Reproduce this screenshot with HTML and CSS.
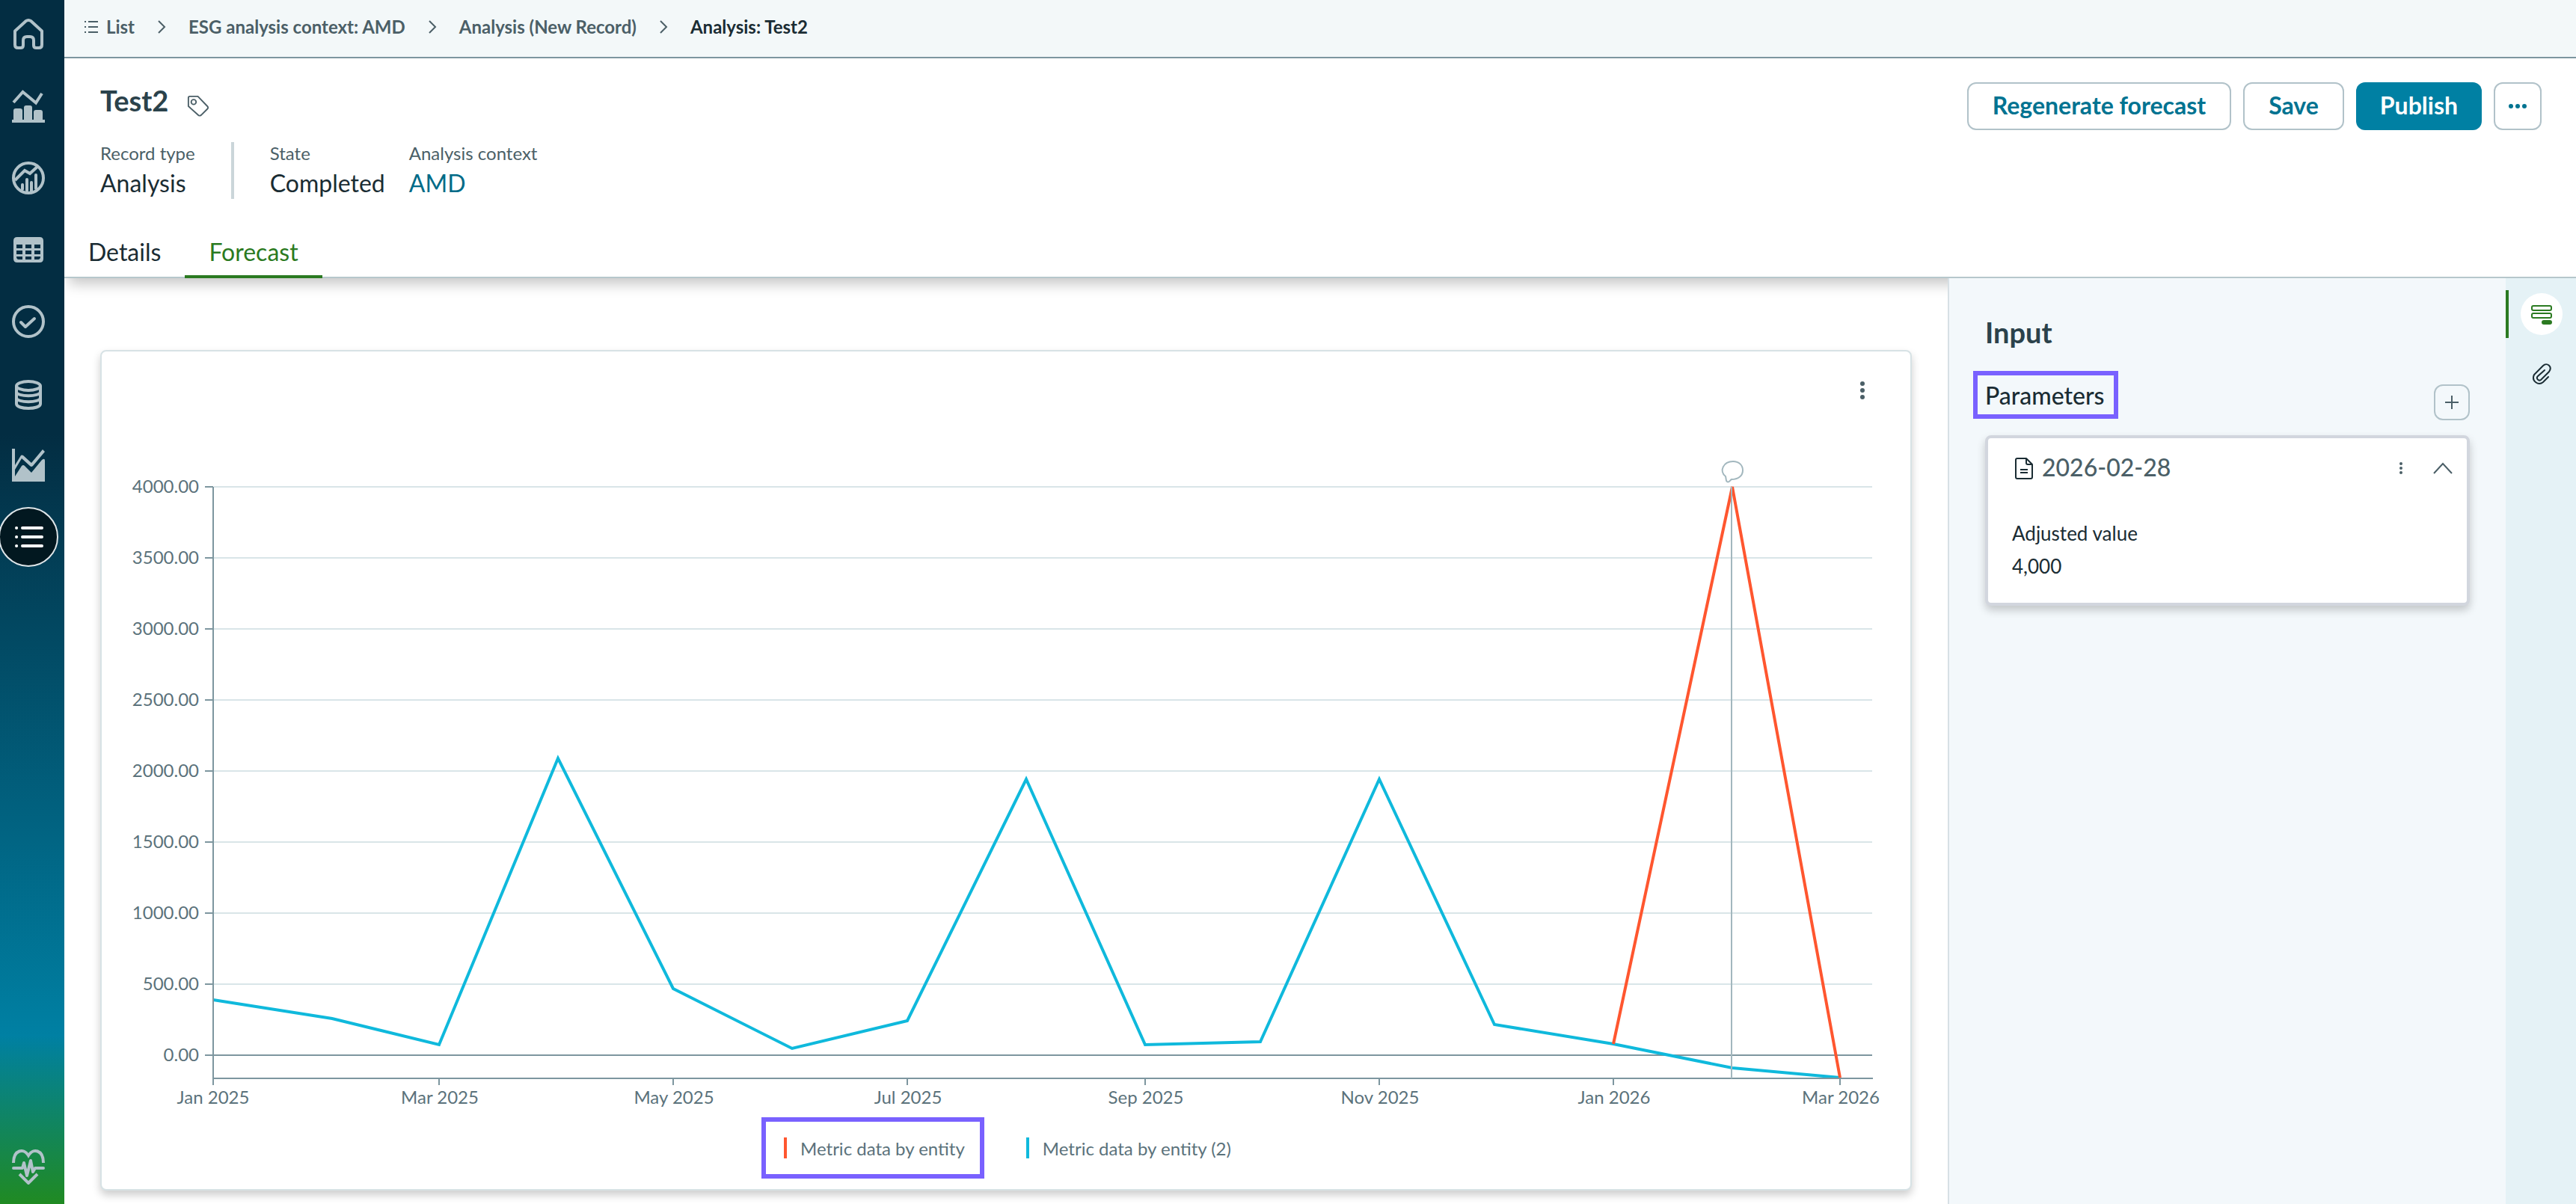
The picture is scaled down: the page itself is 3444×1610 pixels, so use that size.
FILE: index.html
```html
<!DOCTYPE html>
<html lang="en">
<head>
<meta charset="utf-8">
<title>Analysis: Test2</title>
<meta name="viewport" content="width=device-width, initial-scale=1">
<link rel="stylesheet" href="styles.css">
</head>
<body>
<div class="app">
  <nav class="sidebar" aria-label="Main">
    <a class="nav-item" href="#home" aria-label="Home">
      <svg class="icon-nav" viewBox="0 0 48 48" fill="none" stroke="currentColor" stroke-width="4" stroke-linejoin="round"><path d="M6 19.500 20.500 6.200Q24 3.800 27.500 6.200L42 19.500V38Q42 42 38 42H34.500Q31 42 31 38.500V32Q31 27 26 27H22Q17 27 17 32V38.500Q17 42 13.500 42H10Q6 42 6 38Z"/></svg>
    </a>
    <a class="nav-item" href="#dashboards" aria-label="Dashboards">
      <svg class="icon-nav" viewBox="0 0 48 48"><path d="M4 19 16.500 5 34 19.500 42 7" fill="none" stroke="currentColor" stroke-width="4"/><path fill="currentColor" d="M2 42h2V30q0-3 3-3h6q3 0 3 3v12h2V26q0-3 3-3h5q3 0 3 3v16h2V32q0-3 3-3h6q3 0 3 3v10h3v4H2z"/></svg>
    </a>
    <a class="nav-item" href="#analytics" aria-label="Analytics">
      <svg class="icon-nav" viewBox="0 0 48 48" fill="none" stroke="currentColor" stroke-width="4"><circle cx="24" cy="24" r="20"/><path d="M6 27 19 14 26 18 37 8"/><path stroke-linecap="round" d="M16 33v6M22 26v15M28 30v12M34 20v18"/></svg>
    </a>
    <a class="nav-item" href="#tables" aria-label="Tables">
      <svg class="icon-nav" viewBox="0 0 48 48"><path fill="currentColor" fill-rule="evenodd" d="M9 7h30q5 0 5 5v24q0 5-5 5H9q-5 0-5-5V12q0-5 5-5zM8 17v5h8v-5zm12 0v5h8v-5zm12 0v5h8v-5zM8 25v5h8v-5zm12 0v5h8v-5zm12 0v5h8v-5zM8 33q0 4 3 4h5v-4zm12 0v4h8v-4zm12 0v4h5q3 0 3-4z"/></svg>
    </a>
    <a class="nav-item" href="#tasks" aria-label="Tasks">
      <svg class="icon-nav" viewBox="0 0 48 48" fill="none" stroke="currentColor" stroke-width="4" stroke-linecap="round" stroke-linejoin="round"><circle cx="24" cy="24" r="20"/><path d="M14 25l6 6 12-11"/></svg>
    </a>
    <a class="nav-item" href="#data" aria-label="Data">
      <svg class="icon-nav" viewBox="0 -2 48 48" fill="none" stroke="currentColor" stroke-width="4"><ellipse cx="24" cy="12" rx="16" ry="6"/><path d="M8 12v24c0 8 32 8 32 0V12M8 20c0 7 32 7 32 0M8 28c0 7 32 7 32 0"/></svg>
    </a>
    <a class="nav-item" href="#trends" aria-label="Trends">
      <svg class="icon-nav" viewBox="0 0 48 48"><path fill="currentColor" d="M2 2h4v22L14 11q1-1 3 0l11 10L43 3l3 3-16 19q-2 2-4 0L15 15 6 30v9L15 25q2-2 4 0l9 9 14-17q4-3 4 1v28H2z"/></svg>
    </a>
    <a class="nav-item nav-item-active" href="#lists" aria-label="Lists" aria-current="page">
      <svg class="icon-nav" viewBox="0 0 48 48" stroke="currentColor" stroke-width="4" stroke-linecap="round"><path d="M8 12h.1M8 24h.1M8 36h.1M16 12h26M16 24h26M16 36h26"/></svg>
    </a>
    <a class="nav-item nav-item-last" href="#health" aria-label="Health">
      <svg class="icon-nav" viewBox="0 0 48 48" fill="none" stroke="currentColor" stroke-width="4"><path d="M4 19C4 1 18-1 24 9 30-1 44 1 44 19"/><path stroke-linecap="round" stroke-linejoin="round" d="M4 26h12l2-7 4 17 5-20 3 15 3-5h11"/><path d="M12 34l12 12 12-12"/></svg>
    </a>
  </nav>

  <div class="page">
    <nav class="breadcrumb" aria-label="Breadcrumb">
      <a class="crumb" href="#list"><svg class="icon-list" viewBox="0 0 20 20" stroke="currentColor" stroke-width="2"><path d="M1 3h2M1 10h2M1 17h2M6 3h13M6 10h13M6 17h13"/></svg>List</a>
      <svg class="icon-sep" viewBox="0 0 12 18" fill="none" stroke="currentColor" stroke-width="2"><path d="M2 1l8 8-8 8"/></svg>
      <a class="crumb" href="#context">ESG analysis context: AMD</a>
      <svg class="icon-sep" viewBox="0 0 12 18" fill="none" stroke="currentColor" stroke-width="2"><path d="M2 1l8 8-8 8"/></svg>
      <a class="crumb" href="#new">Analysis (New Record)</a>
      <svg class="icon-sep" viewBox="0 0 12 18" fill="none" stroke="currentColor" stroke-width="2"><path d="M2 1l8 8-8 8"/></svg>
      <span class="crumb crumb-current" aria-current="page">Analysis: Test2</span>
    </nav>

    <header class="record">
      <div class="record-info">
        <div class="record-title">
          <h1 class="title">Test2</h1>
          <button class="icon-button" type="button" aria-label="Add tag"><svg class="icon-tag" viewBox="0 0 32 32" fill="none" stroke="currentColor" stroke-width="2" stroke-linejoin="round"><path d="M4 2H15.500L29 16Q31 18 29 20L20 29Q18 30 16.500 29L2 16V4Q2 2 4 2Z"/><circle cx="9.500" cy="10" r="3.500"/></svg></button>
        </div>
        <dl class="facts">
          <div class="fact fact-lead"><dt class="fact-label">Record type</dt><dd class="fact-value">Analysis</dd></div>
          <div class="fact"><dt class="fact-label">State</dt><dd class="fact-value">Completed</dd></div>
          <div class="fact"><dt class="fact-label">Analysis context</dt><dd class="fact-value"><a class="fact-link" href="#amd">AMD</a></dd></div>
        </dl>
      </div>
      <div class="actions">
        <button class="button" type="button">Regenerate forecast</button>
        <button class="button" type="button">Save</button>
        <button class="button button-primary" type="button">Publish</button>
        <button class="button button-more" type="button" aria-label="More actions"><svg class="icon-more" viewBox="0 0 28 8" fill="currentColor"><circle cx="5" cy="4" r="3"/><circle cx="14" cy="4" r="3"/><circle cx="23" cy="4" r="3"/></svg></button>
      </div>
    </header>

    <div class="tabs" role="tablist">
      <button class="tab" type="button" role="tab" aria-selected="false">Details</button>
      <button class="tab tab-active" type="button" role="tab" aria-selected="true">Forecast</button>
    </div>

    <div class="content">
      <main class="main">
        <section class="chart-card" aria-label="Forecast chart">
          <div class="chart-tools">
            <button class="icon-button" type="button" aria-label="Chart menu"><svg class="icon-kebab" viewBox="0 0 8 28" fill="currentColor"><circle cx="4" cy="5" r="3"/><circle cx="4" cy="14" r="3"/><circle cx="4" cy="23" r="3"/></svg></button>
          </div>
          <svg class="chart" viewBox="0 0 2418 890" role="img" aria-label="Metric data by entity, January 2025 to March 2026">
            <path class="grid-line" d="M150 51H2367M150 146H2367M150 241H2367M150 336H2367M150 431H2367M150 526H2367M150 621H2367M150 716H2367"/>
            <path class="axis-line" d="M138 51H149M138 146H149M138 241H149M138 336H149M138 431H149M138 526H149M138 621H149M138 716H149M138 811H2367"/>
            <g class="axis-text axis-text-y">
              <text x="130" y="59">4000.00</text>
              <text x="130" y="154">3500.00</text>
              <text x="130" y="249">3000.00</text>
              <text x="130" y="344">2500.00</text>
              <text x="130" y="439">2000.00</text>
              <text x="130" y="534">1500.00</text>
              <text x="130" y="629">1000.00</text>
              <text x="130" y="724">500.00</text>
              <text x="130" y="819">0.00</text>
            </g>
            <polyline class="series series-blue" points="149,737 308,762 451,797 610,414 764,722 923,802 1077,765 1236,442 1395,797 1549,793 1708,442 1862,770 2021,796 2180,828 2324,841"/>
            <polyline class="series series-red" points="2021,796 2180,51 2324,841"/>
            <path class="axis-line" d="M149 51V851M148 842H2368M451 842V851M764 842V851M1077 842V851M1395 842V851M1708 842V851M2021 842V851M2324 842V851"/>
            <path class="marker-line" d="M2179 51V842"/>
            <path class="marker-bubble" d="M2181 17C2189 17 2194 22 2194 29 2194 37 2187 41 2179 41 2177 42 2176 45 2174 44.500 2171 44.500 2172 40 2171 37 2162 30 2168 17 2181 17Z"/>
            <g class="axis-text axis-text-x">
              <text x="149" y="876">Jan 2025</text>
              <text x="452" y="876">Mar 2025</text>
              <text x="765" y="876">May 2025</text>
              <text x="1078" y="876">Jul 2025</text>
              <text x="1396" y="876">Sep 2025</text>
              <text x="1709" y="876">Nov 2025</text>
              <text x="2022" y="876">Jan 2026</text>
              <text x="2325" y="876">Mar 2026</text>
            </g>
          </svg>
          <ul class="legend">
            <li class="legend-item legend-item-marked"><span class="swatch swatch-red"></span>Metric data by entity</li>
            <li class="legend-item"><span class="swatch swatch-blue"></span>Metric data by entity (2)</li>
          </ul>
        </section>
      </main>

      <aside class="panel" aria-label="Input">
        <h2 class="panel-title">Input</h2>
        <div class="panel-row">
          <h3 class="panel-subtitle">Parameters</h3>
          <button class="add-button" type="button" aria-label="Add parameter"><svg class="icon-plus" viewBox="0 0 20 20" stroke="currentColor" stroke-width="2"><path d="M1 10h18M10 1v18"/></svg></button>
        </div>
        <article class="param-card">
          <div class="param-head">
            <svg class="icon-doc" viewBox="0 0 32 32" fill="none" stroke="currentColor" stroke-width="2" stroke-linejoin="round"><path d="M7 3H19L27 11V28Q27 30 25 30H7Q5 30 5 28V5Q5 3 7 3ZM19 3V9Q19 11 21 11H27M11 18H21M11 22H21"/></svg>
            <h4 class="param-title">2026-02-28</h4>
            <button class="icon-button" type="button" aria-label="Parameter menu"><svg class="icon-kebab-small" viewBox="0 0 8 20" fill="currentColor"><circle cx="4" cy="4" r="2"/><circle cx="4" cy="10" r="2"/><circle cx="4" cy="16" r="2"/></svg></button>
            <button class="icon-button" type="button" aria-label="Collapse"><svg class="icon-chevron" viewBox="0 0 26 16" fill="none" stroke="currentColor" stroke-width="2"><path d="M1 15 13 2 25 15"/></svg></button>
          </div>
          <dl class="param-body">
            <dt>Adjusted value</dt>
            <dd>4,000</dd>
          </dl>
        </article>
      </aside>

      <div class="rail">
        <button class="rail-item rail-item-active" type="button" aria-label="Input form"><span class="rail-disc"><svg class="icon-rail" viewBox="0 0 32 32" fill="none" stroke="currentColor" stroke-width="2"><rect x="3" y="5" width="26" height="6" rx="2"/><rect x="3" y="15" width="26" height="6" rx="2"/><rect x="17" y="25" width="12" height="4" rx="2" fill="currentColor"/></svg></span></button>
        <button class="rail-item" type="button" aria-label="Attachments"><span class="rail-disc"><svg class="icon-rail" viewBox="0 0 32 32" fill="none" stroke="currentColor" stroke-width="2" stroke-linecap="round"><path d="M25 20 18 27C12 32 2 26 6 17L18 5C23 0 31 6 26 13L15 24C12 26 8 22 11 19L20 11"/></svg></span></button>
      </div>
    </div>
  </div>
</div>
</body>
</html>
```
FILE: styles.css
```css
*,
*::before,
*::after {
  box-sizing: border-box;
}

body,
h1,
h2,
h3,
h4,
dl,
dd,
ul {
  margin: 0;
  padding: 0;
}

body {
  font-family: Lato, "Noto Sans", sans-serif;
  font-size: 24px;
  color: #1a2c33;
  background: #fff;
}

a {
  color: inherit;
  text-decoration: none;
}

button {
  margin: 0;
  padding: 0;
  border: 0;
  background: none;
  color: inherit;
  font: inherit;
  cursor: pointer;
}

svg {
  display: block;
  flex: none;
}

.app {
  display: flex;
  min-height: 100vh;
}

/* Sidebar */
.sidebar {
  position: relative;
  z-index: 3;
  display: flex;
  flex-direction: column;
  gap: 16px;
  flex: none;
  width: 86px;
  padding: 6px 10px 10px 0;
  background: linear-gradient(#032d42 0%, #032d42 36%, #0080a3 86%, #208a22 100%);
}

.nav-item {
  display: grid;
  place-items: center;
  height: 80px;
  color: #b1c2c9;
}

.nav-item-active {
  margin: 0 -2px;
  border: 2px solid #dfe6e9;
  border-radius: 50%;
  background: #021820;
  color: #fff;
}

.nav-item-last {
  margin-top: auto;
}

.icon-nav {
  width: 48px;
  height: 48px;
}

.page {
  display: flex;
  flex-direction: column;
  flex: 1;
  min-width: 0;
}

/* Breadcrumb */
.breadcrumb {
  display: flex;
  align-items: center;
  gap: 30px;
  height: 78px;
  padding: 0 26px 4px;
  border-bottom: 2px solid #7d969f;
  background: #f3f8f9;
  color: #4b5f67;
  font-weight: 700;
  line-height: 28px;
}

.crumb {
  display: flex;
  align-items: center;
  gap: 10px;
}

.crumb-current {
  color: #1a2c33;
}

.icon-list {
  width: 20px;
  height: 20px;
}

.icon-sep {
  width: 12px;
  height: 18px;
}

/* Record header */
.record {
  display: flex;
  justify-content: space-between;
  align-items: flex-start;
  padding: 32px 46px 40px 48px;
}

.record-info {
  display: flex;
  flex-direction: column;
  gap: 32px;
}

.record-title {
  display: flex;
  align-items: center;
  gap: 16px;
  height: 48px;
}

.title,
.panel-title {
  color: #2b424b;
  font-size: 38px;
  font-weight: 700;
  line-height: 48px;
}

.icon-button {
  display: grid;
  place-items: center;
  width: 48px;
  height: 48px;
  color: #4b5f67;
}

.icon-tag {
  width: 30px;
  height: 30px;
  margin-top: 16px;
}

.facts {
  display: flex;
  gap: 32px;
}

.fact {
  display: flex;
  flex-direction: column;
  gap: 4px;
}

.fact-lead {
  margin-right: 16px;
  padding-right: 48px;
  border-right: 4px solid #cbd6da;
}

.fact-label {
  color: #4b5f67;
  line-height: 30px;
}

.fact-value {
  font-size: 32px;
  line-height: 42px;
}

.fact-link {
  color: #006b88;
}

.actions {
  display: flex;
  gap: 16px;
}

.button {
  height: 64px;
  padding: 0 32px 2px;
  border: 2px solid #b1c2c9;
  border-radius: 12px;
  color: #007391;
  font-size: 32px;
  font-weight: 700;
  line-height: 40px;
}

.button-primary {
  border: 0;
  background: #0080a3;
  color: #fff;
}

.button-more {
  display: grid;
  place-items: center;
  width: 64px;
  padding: 0;
}

.icon-more {
  width: 28px;
  height: 8px;
}

/* Tabs */
.tabs {
  position: relative;
  z-index: 1;
  display: flex;
  height: 66px;
  border-bottom: 2px solid #b6c7cc;
  box-shadow: 0 14px 18px -6px rgba(0, 0, 0, 0.22);
}

.tab {
  height: 66px;
  padding: 0 32px;
  border-bottom: 4px solid transparent;
  font-size: 32px;
  line-height: 40px;
}

.tab-active {
  border-bottom-color: #2b7a21;
  color: #2b7a21;
}

.content {
  display: flex;
  flex: 1;
}

.main {
  flex: 1;
  min-width: 0;
  padding: 96px 48px 18px;
}

/* Chart */
.chart-card {
  padding-bottom: 14px;
  border: 2px solid #d7e2e5;
  border-radius: 8px;
  background: #fff;
  box-shadow: 0 6px 12px rgba(0, 0, 0, 0.2);
}

.chart-tools {
  display: flex;
  justify-content: flex-end;
  height: 130px;
  padding: 28px 40px 0;
}

.icon-kebab {
  width: 8px;
  height: 28px;
}

.chart {
  width: 100%;
  height: auto;
}

.grid-line,
.axis-line,
.marker-line,
.marker-bubble,
.series {
  fill: none;
  stroke-width: 2;
}

.grid-line {
  stroke: #d9e5e8;
}

.axis-line {
  stroke: #7d969f;
}

.marker-line,
.marker-bubble {
  stroke: #a2b7be;
}

.series {
  stroke-width: 4;
}

.series-blue {
  stroke: #0fb9dc;
}

.series-red {
  stroke: #ff562f;
}

.axis-text {
  fill: #5b727b;
  font-size: 24px;
}

.axis-text-y {
  text-anchor: end;
}

.axis-text-x {
  text-anchor: middle;
}

.legend {
  display: flex;
  justify-content: center;
  gap: 26px;
  margin-top: 4px;
  list-style: none;
  color: #5b727b;
}

.legend-item {
  display: flex;
  align-items: center;
  gap: 18px;
  height: 82px;
  padding: 0 20px 0 24px;
  border: 6px solid transparent;
}

.legend-item-marked {
  border-color: #7961ff;
}

.swatch {
  width: 4px;
  height: 28px;
}

.swatch-red {
  background: #ff562f;
}

.swatch-blue {
  background: #0fb9dc;
}

/* Input panel */
.panel {
  position: relative;
  z-index: 2;
  flex: none;
  width: 746px;
  padding: 48px;
  border-left: 2px solid #d7e0e5;
  background: #f3f8fb;
}

.panel-row {
  display: flex;
  justify-content: space-between;
  align-items: flex-start;
  height: 66px;
  margin: 28px 0 20px;
}

.panel-subtitle {
  margin-left: -16px;
  padding: 7px 12px 5px 10px;
  border: 6px solid #7961ff;
  font-size: 32px;
  font-weight: 500;
  line-height: 40px;
}

.add-button {
  display: grid;
  place-items: center;
  align-self: flex-end;
  width: 48px;
  height: 48px;
  border: 2px solid #b1c2c9;
  border-radius: 12px;
  color: #4b5f67;
}

.icon-plus {
  width: 20px;
  height: 20px;
}

.param-card {
  padding: 12px 8px 28px 32px;
  border: 4px solid #d2d6de;
  border-radius: 8px;
  background: #fff;
  box-shadow: 0 6px 12px rgba(0, 0, 0, 0.2);
}

.param-head {
  display: flex;
  align-items: center;
  gap: 8px;
  height: 56px;
}

.icon-doc {
  width: 32px;
  height: 32px;
}

.param-title {
  flex: 1;
  padding-bottom: 2px;
  color: #4b5f67;
  font-size: 32px;
  font-weight: 500;
  line-height: 40px;
}

.icon-kebab-small {
  width: 8px;
  height: 20px;
}

.icon-chevron {
  width: 26px;
  height: 16px;
}

.param-body {
  display: grid;
  gap: 2px;
  margin-top: 38px;
  font-size: 26px;
  line-height: 42px;
}

/* Right rail */
.rail {
  position: relative;
  z-index: 2;
  display: flex;
  flex-direction: column;
  gap: 16px;
  flex: none;
  width: 94px;
  padding-top: 16px;
  background: #e5f2f6;
}

.rail-item {
  display: grid;
  place-items: center;
  height: 64px;
  padding-right: 2px;
  border-left: 4px solid transparent;
}

.rail-item-active {
  border-left-color: #2b7a21;
  color: #2b7a21;
}

.rail-disc {
  display: grid;
  place-items: center;
  width: 56px;
  height: 56px;
  border-radius: 50%;
}

.rail-item-active .rail-disc {
  background: #fff;
}

.icon-rail {
  width: 32px;
  height: 32px;
}
```
